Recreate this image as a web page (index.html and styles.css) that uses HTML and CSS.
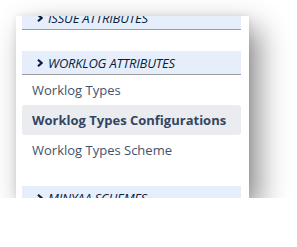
FILE: index.html
```html
<!DOCTYPE html>
<html>
<head>
<meta charset="utf-8">
<link rel="stylesheet" href="styles.css">
</head>
<body>
<div class="card">
  <div class="section-head section-head--clipped">
    <svg class="chev" width="6" height="8" viewBox="0 0 6 8"><polyline points="1,0.8 4.6,4 1,7.2" fill="none" stroke="#091e42" stroke-width="2.2"/></svg>
    <span>Issue Attributes</span>
  </div>
  <div class="section-head section-head--gap">
    <svg class="chev" width="6" height="8" viewBox="0 0 6 8"><polyline points="1,0.8 4.6,4 1,7.2" fill="none" stroke="#091e42" stroke-width="2.2"/></svg>
    <span>Worklog Attributes</span>
  </div>
  <ul class="menu">
    <li class="menu-item">Worklog Types</li>
    <li class="menu-item menu-item--active">Worklog Types Configurations</li>
    <li class="menu-item">Worklog Types Scheme</li>
  </ul>
  <div class="section-head section-head--gap">
    <svg class="chev" width="6" height="8" viewBox="0 0 6 8"><polyline points="1,0.8 4.6,4 1,7.2" fill="none" stroke="#091e42" stroke-width="2.2"/></svg>
    <span>Minyaa Schemes</span>
  </div>
</div>
</body>
</html>
```
FILE: styles.css
```css
html, body {
  margin: 0;
  padding: 0;
  background: #ffffff;
}
body {
  padding: 16px 0 0 16px;
  font-family: "Open Sans", "Liberation Sans", sans-serif;
}
.card {
  width: 233px;
  height: 182px;
  box-sizing: border-box;
  padding: 0 8px 0 6px;
  background: #ffffff;
  overflow: hidden;
  box-shadow: 10px 12px 28px rgba(0, 0, 0, 0.45), 0 0 7px rgba(0, 0, 0, 0.08);
}
.section-head {
  display: flex;
  align-items: center;
  height: 23px;
  padding-left: 15px;
  background: #e6eefb;
  border-bottom: 1px solid #9c9c9c;
  color: #091e42;
  font-size: 13px;
  font-style: italic;
  text-transform: uppercase;
  letter-spacing: -0.2px;
}
.section-head--clipped {
  margin-top: -10px;
}
.section-head--gap {
  margin-top: 21px;
}
.chev {
  margin-right: 5px;
  flex: none;
}
.menu {
  list-style: none;
  margin: 0;
  padding: 0;
}
.menu-item {
  height: 30px;
  display: flex;
  align-items: center;
  padding-left: 10px;
  font-size: 13px;
  color: #42526e;
  border-radius: 3px;
}
.menu-item--active {
  background: #ebecf0;
  font-weight: 700;
  color: #344563;
}
```
